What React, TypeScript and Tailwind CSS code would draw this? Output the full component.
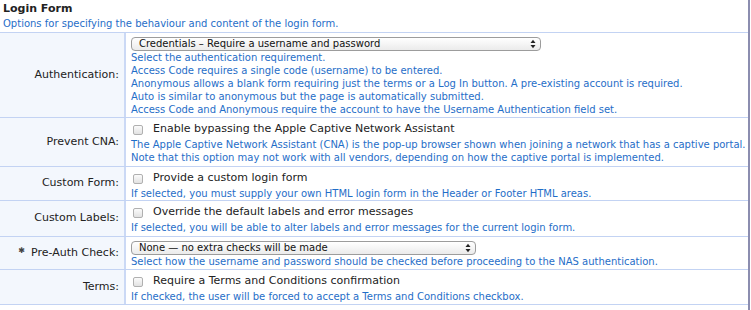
import React from "react";

const Stepper = () => (
  <svg width="6" height="10" viewBox="0 0 6 10" className="shrink-0">
    <path d="M0.5 4 L3 0.8 L5.5 4 Z" fill="#222" />
    <path d="M0.5 6 L5.5 6 L3 9.2 Z" fill="#222" />
  </svg>
);

const Select = ({ text, width }: { text: string; width: string }) => (
  <div
    className={`${width} h-[14px] flex items-center justify-between pl-[7px] pr-[4px] border border-[#9c9c9c] rounded-[4px] bg-gradient-to-b from-[#ffffff] to-[#ebebeb] text-[10px] leading-[12px] text-[#111]`}
  >
    <span>{text}</span>
    <Stepper />
  </div>
);

const Check = ({ text }: { text: string }) => (
  <div className="h-[17px] flex items-center text-[11px] text-[#222]">
    <span className="ml-[2px] w-[10px] h-[10px] rounded-[2px] border border-[#b0b0b0] bg-gradient-to-b from-[#fbfbfb] to-[#e2e2e2] shrink-0" />
    <span className="ml-[10px]">{text}</span>
  </div>
);

const Desc = ({ lines }: { lines: string[] }) => (
  <div className="text-[10px] leading-[13px] text-[#1f6ec8]">
    {lines.map((l, i) => (
      <div key={i} className="whitespace-nowrap">
        {l}
      </div>
    ))}
  </div>
);

const Row = ({
  label,
  star,
  pad,
  children,
}: {
  label: string;
  star?: boolean;
  pad: string;
  children: React.ReactNode;
}) => (
  <div className="flex border-t border-[#c3d3f3]">
    <div className="w-[126px] shrink-0 bg-[#f3f7fd] border-r-[2px] border-[#cbd9f5] flex items-center justify-end pr-[5px] text-[11px] text-[#222]">
      {star && <span className="text-[8px] text-[#444] mr-[6px] -mt-[5px]">✱</span>}
      <span>{label}</span>
    </div>
    <div className={`flex-1 pl-[5px] ${pad}`}>{children}</div>
  </div>
);

export default function App() {
  return (
    <div className="w-[751px] h-[310px] flex bg-white font-['DejaVu_Sans',sans-serif]">
      <div className="w-[748px] flex flex-col">
        <div className="pl-[3px] pt-[2px] pb-[2px]">
          <div className="text-[11px] leading-[14px] font-bold text-[#222]">Login Form</div>
          <div className="mt-[1px] text-[10px] leading-[13px] text-[#1f6ec8]">
            Options for specifying the behaviour and content of the login form.
          </div>
        </div>

        <Row label="Authentication:" pad="pt-[4px] pb-[1px]">
          <Select text="Credentials – Require a username and password" width="w-[410px]" />
          <Desc
            lines={[
              "Select the authentication requirement.",
              "Access Code requires a single code (username) to be entered.",
              "Anonymous allows a blank form requiring just the terms or a Log In button. A pre-existing account is required.",
              "Auto is similar to anonymous but the page is automatically submitted.",
              "Access Code and Anonymous require the account to have the Username Authentication field set.",
            ]}
          />
        </Row>

        <Row label="Prevent CNA:" pad="pt-[3px] pb-[2px]">
          <Check text="Enable bypassing the Apple Captive Network Assistant" />
          <Desc
            lines={[
              "The Apple Captive Network Assistant (CNA) is the pop-up browser shown when joining a network that has a captive portal.",
              "Note that this option may not work with all vendors, depending on how the captive portal is implemented.",
            ]}
          />
        </Row>

        <Row label="Custom Form:" pad="pt-[3px] pb-0">
          <Check text="Provide a custom login form" />
          <Desc lines={["If selected, you must supply your own HTML login form in the Header or Footer HTML areas."]} />
        </Row>

        <Row label="Custom Labels:" pad="pt-[3px] pb-[2px]">
          <Check text="Override the default labels and error messages" />
          <Desc lines={["If selected, you will be able to alter labels and error messages for the current login form."]} />
        </Row>

        <Row label="Pre-Auth Check:" star pad="pt-[4px] pb-[1px]">
          <Select text="None — no extra checks will be made" width="w-[345px]" />
          <Desc
            lines={["Select how the username and password should be checked before proceeding to the NAS authentication."]}
          />
        </Row>

        <Row label="Terms:" pad="pt-[3px] pb-[1px]">
          <Check text="Require a Terms and Conditions confirmation" />
          <Desc lines={["If checked, the user will be forced to accept a Terms and Conditions checkbox."]} />
        </Row>
        <div className="border-t border-[#c3d3f3]" />
      </div>
      <div className="w-[2px] bg-[#8b8daf]" />
      <div className="w-[1px]" />
    </div>
  );
}
